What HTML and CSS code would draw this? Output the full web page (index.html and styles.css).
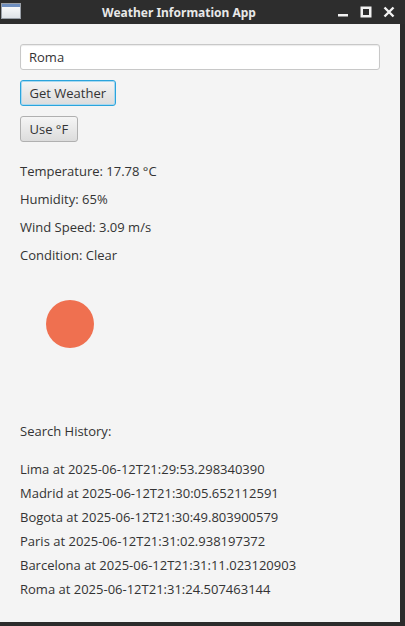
FILE: index.html
```html
<!DOCTYPE html>
<html>
<head>
<meta charset="utf-8">
<link rel="stylesheet" href="styles.css">
</head>
<body>
<div class="window">
  <div class="titlebar">
    <div class="app-icon"><div class="app-icon-top"></div></div>
    <div class="title">Weather Information App</div>
    <div class="controls">
      <svg class="ctl" width="12" height="12" viewBox="0 0 12 12"><rect x="1" y="8" width="10" height="2.5" fill="#f2f2f2"/></svg>
      <svg class="ctl" width="12" height="12" viewBox="0 0 12 12"><rect x="1.75" y="1.75" width="8.5" height="8.5" fill="none" stroke="#f2f2f2" stroke-width="2.5"/></svg>
      <svg class="ctl" width="12" height="12" viewBox="0 0 12 12"><path d="M1.5 1.5 L10.5 10.5 M10.5 1.5 L1.5 10.5" stroke="#f2f2f2" stroke-width="2.4"/></svg>
    </div>
  </div>
  <div class="body-row">
    <div class="content">
      <div class="field">Roma</div>
      <button class="btn focused">Get Weather</button>
      <button class="btn second">Use °F</button>
      <div class="info">
        <div class="label">Temperature: 17.78 °C</div>
        <div class="label">Humidity: 65%</div>
        <div class="label">Wind Speed: 3.09 m/s</div>
        <div class="label">Condition: Clear</div>
      </div>
      <div class="sun"></div>
      <div class="label history-title">Search History:</div>
      <div class="history">
        <div class="hitem">Lima at 2025-06-12T21:29:53.298340390</div>
        <div class="hitem">Madrid at 2025-06-12T21:30:05.652112591</div>
        <div class="hitem">Bogota at 2025-06-12T21:30:49.803900579</div>
        <div class="hitem">Paris at 2025-06-12T21:31:02.938197372</div>
        <div class="hitem">Barcelona at 2025-06-12T21:31:11.023120903</div>
        <div class="hitem">Roma at 2025-06-12T21:31:24.507463144</div>
      </div>
    </div>
    <div class="rborder"></div>
  </div>
  <div class="bborder"></div>
</div>
</body>
</html>
```
FILE: styles.css
```css
html, body {
  margin: 0;
  padding: 0;
  background: #2b2b2b;
}
.window {
  width: 405px;
  height: 626px;
  display: flex;
  flex-direction: column;
  overflow: hidden;
  font-family: "Open Sans", "Noto Sans", sans-serif;
}
.titlebar {
  height: 24px;
  background: #2d2d2d;
  display: flex;
  align-items: center;
  position: relative;
  flex: none;
}
.app-icon {
  margin-left: 1px;
  width: 20px;
  height: 16px;
  background: linear-gradient(#ffffff, #dfe3e8);
  border: 1px solid #9aa0a8;
  box-sizing: border-box;
  margin-top: -3px;
}
.app-icon-top {
  height: 3px;
  background: #6f8fc0;
}
.title {
  flex: 1;
  text-align: center;
  color: #e8e8e8;
  font-family: "Noto Sans", sans-serif;
  font-weight: bold;
  font-size: 12px;
  margin-left: 0;
}
.controls {
  display: flex;
  gap: 11px;
  margin-right: 10px;
}
.body-row {
  display: flex;
  flex: 1;
  min-height: 0;
}
.content {
  width: 400px;
  background: #f4f4f4;
  padding: 20px 20px 0 20px;
  box-sizing: border-box;
  display: flex;
  flex-direction: column;
  align-items: flex-start;
  color: #333333;
  font-size: 13px;
}
.rborder {
  flex: 1;
  background: #2b2b2b;
}
.bborder {
  height: 4px;
  flex: none;
  background: #2b2b2b;
}
.field {
  width: 360px;
  height: 26px;
  box-sizing: border-box;
  background: #ffffff;
  border: 1px solid #c8c8c8;
  border-radius: 3px;
  box-shadow: inset 0 1px 1px #ececec;
  padding: 0 8px;
  line-height: 24px;
  font-size: 13px;
}
.btn {
  font-family: inherit;
  font-size: 13px;
  color: #333;
  height: 26px;
  box-sizing: border-box;
  padding: 0 8.5px;
  background: linear-gradient(#f5f5f5, #dcdcdc);
  border: 1px solid #b0b0b0;
  border-radius: 3px;
  margin-top: 10px;
  line-height: 22px;
}
.btn.focused {
  border: 1px solid #2aa4dc;
  box-shadow: inset 0 0 0 1px #a8d8f0;
}
.info {
  margin-top: 20px;
  display: flex;
  flex-direction: column;
  gap: 10px;
}
.label {
  line-height: 18px;
  height: 18px;
}
.sun {
  width: 48px;
  height: 48px;
  border-radius: 50%;
  background: #ef7050;
  margin-top: 36px;
  margin-left: 26px;
}
.history-title {
  margin-top: 74px;
}
.history {
  margin-top: 20px;
  display: flex;
  flex-direction: column;
}
.hitem {
  line-height: 18px;
  height: 18px;
  margin-bottom: 6px;
}
```
